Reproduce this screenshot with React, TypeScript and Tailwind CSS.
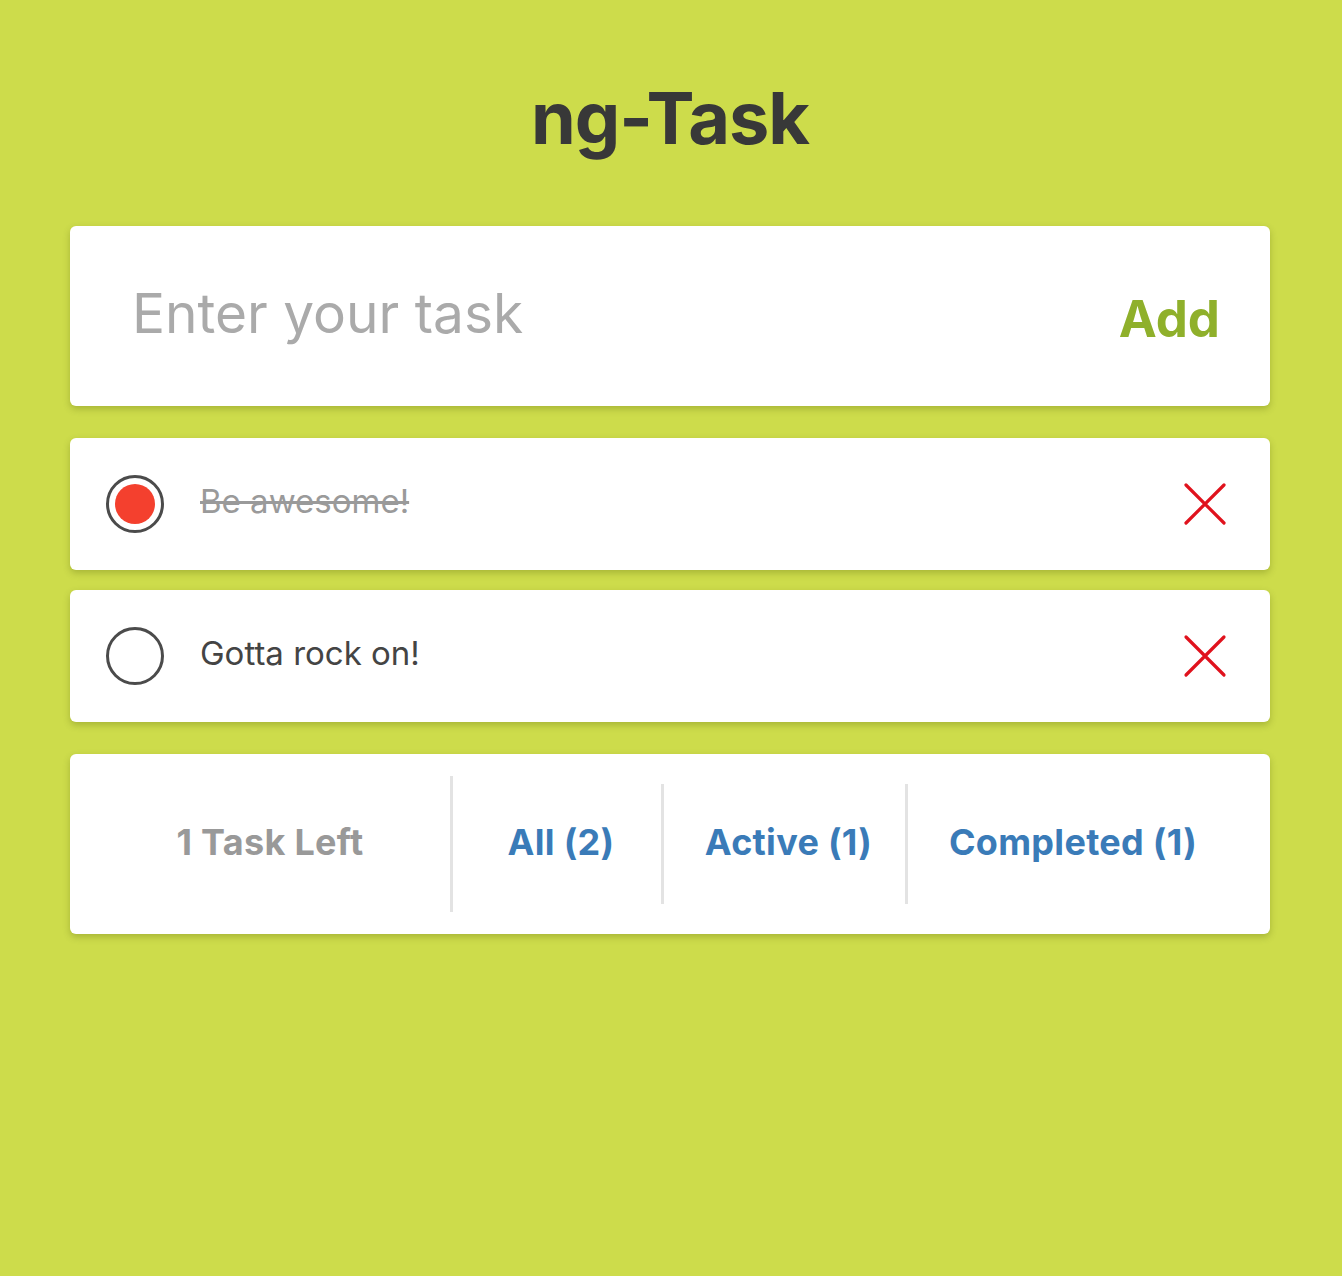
import { useState } from "react";

type Task = { id: number; title: string; done: boolean };

const INITIAL: Task[] = [
  { id: 1, title: "Be awesome!", done: true },
  { id: 2, title: "Gotta rock on!", done: false },
];

const card = "rounded-[6px] bg-white shadow-[0_3px_7px_rgba(70,80,0,0.28)]";

function CloseIcon() {
  return (
    <svg width="44" height="44" viewBox="0 0 44 44" fill="none">
      <path d="M3 3L41 41M41 3L3 41" stroke="#e0121d" strokeWidth="3.2" strokeLinecap="round" />
    </svg>
  );
}

export default function App() {
  const [tasks, setTasks] = useState<Task[]>(INITIAL);
  const [draft, setDraft] = useState("");

  const left = tasks.filter((t) => !t.done).length;
  const completed = tasks.length - left;

  const toggle = (id: number) =>
    setTasks((list) => list.map((t) => (t.id === id ? { ...t, done: !t.done } : t)));
  const remove = (id: number) => setTasks((list) => list.filter((t) => t.id !== id));
  const add = () => {
    if (!draft.trim()) return;
    setTasks((list) => [...list, { id: Date.now(), title: draft.trim(), done: false }]);
    setDraft("");
  };

  return (
    <div className="min-h-[1276px] bg-[#cddc4b] font-['Inter','Lato',sans-serif]">
      <main className="ml-[70px] flex w-[1200px] flex-col pt-[82px]">
        <h1 className="text-center text-[72px] font-bold leading-none tracking-[-1px] text-[#383838]">
          ng-Task
        </h1>

        <div className={`${card} mt-[72px] flex h-[180px] items-center pl-[62px] pr-[50px]`}>
          <input
            value={draft}
            onChange={(e) => setDraft(e.target.value)}
            onKeyDown={(e) => e.key === "Enter" && add()}
            placeholder="Enter your task"
            className="mb-[6px] flex-1 bg-transparent text-[55px] font-normal text-[#444] outline-none placeholder:text-[#aaaaaa]"
          />
          <button onClick={add} className="mt-[6px] text-[51px] font-bold text-[#8fb02b]">
            Add
          </button>
        </div>

        <ul className="mt-[32px] flex flex-col gap-[20px]">
          {tasks.map((task) => (
            <li key={task.id} className={`${card} flex h-[132px] items-center pl-[36px] pr-[43px]`}>
              <button
                onClick={() => toggle(task.id)}
                className="flex h-[58px] w-[58px] shrink-0 items-center justify-center rounded-full border-[3px] border-[#4b4b4b]"
              >
                {task.done && <span className="h-[40px] w-[40px] rounded-full bg-[#f4402e]" />}
              </button>
              <span
                className={`mb-[5px] ml-[36px] flex-1 text-[33px] ${
                  task.done ? "text-[#9a9a9a] line-through" : "text-[#444444]"
                }`}
              >
                {task.title}
              </span>
              <button onClick={() => remove(task.id)}>
                <CloseIcon />
              </button>
            </li>
          ))}
        </ul>

        <div className={`${card} mt-[32px] flex h-[180px] items-center text-[36px] font-bold tracking-[0.3px]`}>
          <div className="mb-[4px] w-[380px] pl-[20px] text-center text-[#999999]">
            {left} Task Left
          </div>
          <div className="h-[136px] w-[3px] bg-[#e3e3e3]" />
          <button className="mb-[4px] w-[208px] pl-[8px] text-center text-[#3a7bb8]">All ({tasks.length})</button>
          <div className="h-[120px] w-[3px] bg-[#e3e3e3]" />
          <button className="mb-[4px] w-[241px] pl-[8px] text-center text-[#3a7bb8]">Active ({left})</button>
          <div className="h-[120px] w-[3px] bg-[#e3e3e3]" />
          <button className="mb-[4px] flex-1 pr-[32px] text-center text-[#3a7bb8]">Completed ({completed})</button>
        </div>
      </main>
    </div>
  );
}
